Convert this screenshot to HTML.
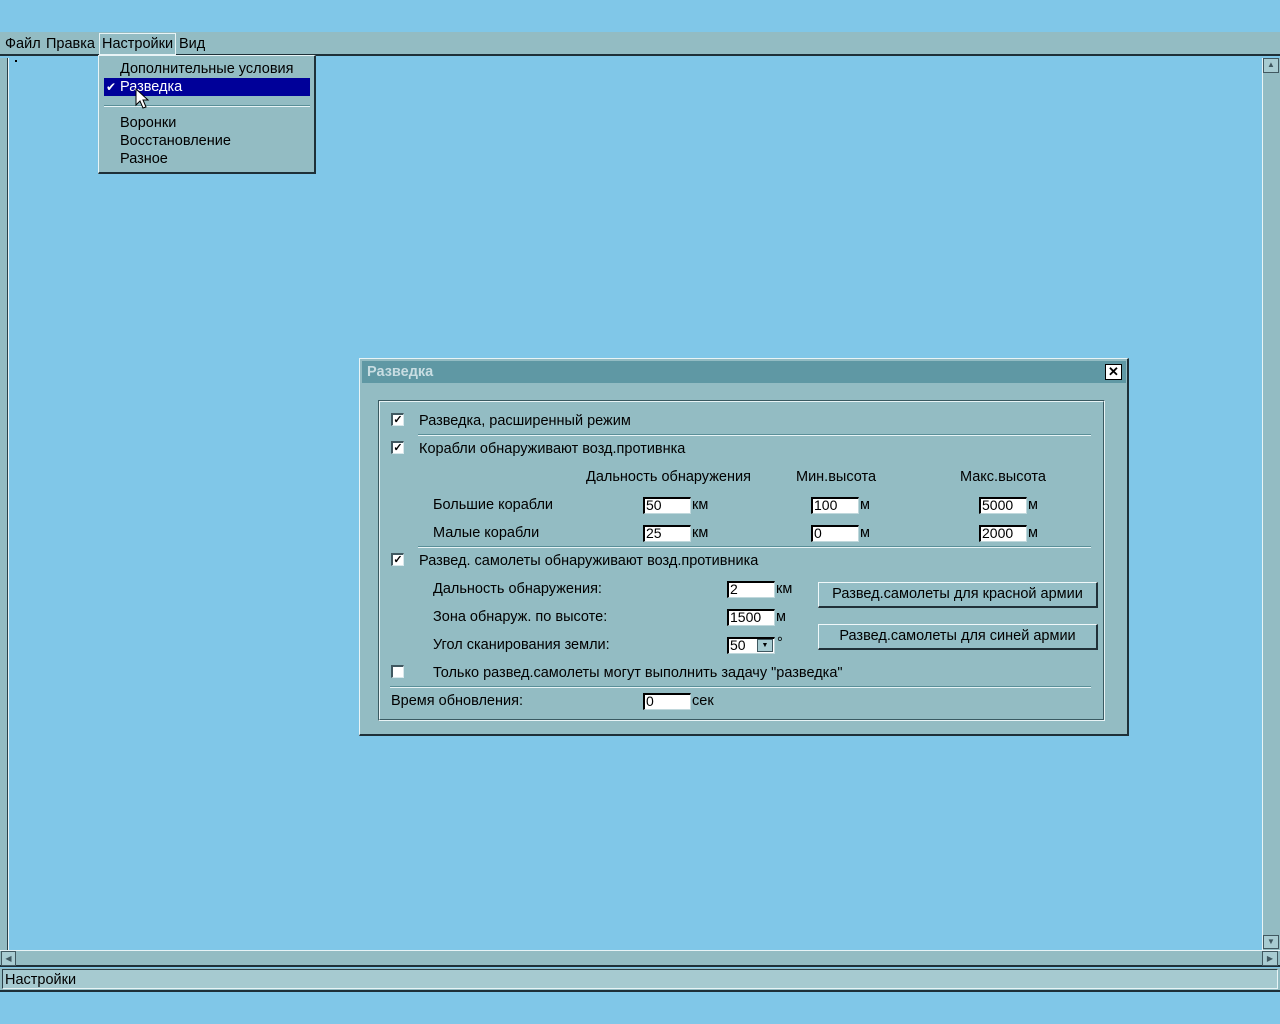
<!DOCTYPE html><html><head><meta charset="utf-8"><style>
body{margin:0;width:1280px;height:1024px;background:#80c7e8;position:relative;overflow:hidden;font-family:"Liberation Sans",Arial,sans-serif;font-size:14.5px;color:#000}
div,span{position:absolute;box-sizing:border-box}
.t{white-space:nowrap;line-height:16px;margin-top:1px}
.cb{width:13px;height:13px;background:#fff;border-top:2px solid #405860;border-left:2px solid #405860;border-right:1px solid #d8e8ec;border-bottom:1px solid #d8e8ec;font-size:11px;line-height:10px;text-align:center;font-weight:bold}
.in{height:17px;background:#fff;border-top:2px solid #000;border-left:2px solid #000;border-right:1px solid #c0d8dc;border-bottom:1px solid #c0d8dc;line-height:12px;padding-left:1px;font-size:14px}
.sep{height:2px;border-top:1px solid #5a8f98;border-bottom:1px solid #e8f4f6}
.btn{height:26px;background:#94bec6;border-top:1px solid #f0f8fa;border-left:1px solid #f0f8fa;border-right:2px solid #203038;border-bottom:2px solid #203038;text-align:center;line-height:22px}
</style></head><body>
<div style="left:0;top:32px;width:1280px;height:24px;background:#93bcc3;border-bottom:2px solid #1e3038"></div>
<div class="t" style="left:5px;top:35px">Файл</div>
<div class="t" style="left:46px;top:35px">Правка</div>
<div style="left:99px;top:33px;width:77px;height:22px;border:1px solid #e8f4f6"></div>
<div class="t" style="left:102px;top:35px">Настройки</div>
<div class="t" style="left:179px;top:35px">Вид</div>
<div style="left:0;top:58px;width:8px;height:892px;background:#93bcc3;border-right:1px solid #2a4048"></div>
<div style="left:8px;top:58px;width:10px;height:892px;border-left:1px solid #e8f4f6"></div>
<div style="left:15px;top:60px;width:2px;height:2px;background:#000"></div>
<div style="left:1262px;top:58px;width:18px;height:892px;background:#93bcc3;border-left:1px solid #e8f4f6"></div>
<div style="left:1263px;top:58px;width:16px;height:15px;background:#a8ccd2;border:1px solid #405860;font-size:8px;line-height:12px;text-align:center;color:#405860">▲</div>
<div style="left:1263px;top:935px;width:16px;height:14px;background:#a8ccd2;border:1px solid #405860;font-size:8px;line-height:12px;text-align:center;color:#405860">▼</div>
<div style="left:0;top:950px;width:1280px;height:17px;background:#93bcc3;border-top:1px solid #e8f4f6;border-bottom:2px solid #1e3038"></div>
<div style="left:1px;top:951px;width:15px;height:15px;background:#a8ccd2;border:1px solid #405860;font-size:8px;line-height:13px;text-align:center;color:#405860">◀</div>
<div style="left:1262px;top:951px;width:16px;height:15px;background:#a8ccd2;border:1px solid #405860;font-size:8px;line-height:13px;text-align:center;color:#405860">▶</div>
<div style="left:0;top:968px;width:1280px;height:24px;background:#93bcc3;border-bottom:2px solid #1e3038"></div>
<div style="left:2px;top:969px;width:1276px;height:20px;background:#a6cad0;border:1px solid #e8f4f6;border-top-color:#2a4048;border-left-color:#2a4048"></div>
<div class="t" style="left:5px;top:971px">Настройки</div>
<div style="left:98px;top:55px;width:218px;height:119px;background:#93bcc3;border:1px solid #e8f4f6;border-right:2px solid #1e3038;border-bottom:2px solid #1e3038"></div>
<div class="t" style="left:120px;top:60px">Дополнительные условия</div>
<div style="left:104px;top:78px;width:206px;height:18px;background:#000099"></div>
<div class="t" style="left:106px;top:78px;color:#fff;font-size:12px">✔</div>
<div class="t" style="left:120px;top:78px;color:#fff">Разведка</div>
<div style="left:104px;top:105px;width:206px;height:2px;border-top:1px solid #5a8f98;border-bottom:1px solid #e8f4f6"></div>
<div class="t" style="left:120px;top:114px">Воронки</div>
<div class="t" style="left:120px;top:132px">Восстановление</div>
<div class="t" style="left:120px;top:150px">Разное</div>
<svg style="position:absolute;left:135px;top:88px" width="16" height="24"><path d="M1 1 L1 17 L5 13 L8 20 L11 19 L8 12 L13 12 Z" fill="#fff" stroke="#000" stroke-width="1"/></svg>
<div style="left:359px;top:358px;width:770px;height:378px;background:#93bcc3;border:1px solid #e8f4f6;border-right:2px solid #1e3038;border-bottom:2px solid #1e3038"></div>
<div style="left:362px;top:361px;width:764px;height:22px;background:#5f98a4"></div>
<div class="t" style="left:367px;top:363px;color:#c8dde2;font-weight:bold">Разведка</div>
<div style="left:1105px;top:364px;width:17px;height:16px;background:#fff;border:1px solid #000;font-size:13px;line-height:13px;text-align:center;font-weight:bold">✕</div>
<div style="left:378px;top:400px;width:727px;height:321px;border:1px solid #e8f4f6;border-top-color:#3a5a62;border-left-color:#3a5a62"></div>
<div style="left:379px;top:401px;width:725px;height:319px;border:1px solid #3a5a62;border-top-color:#e8f4f6;border-left-color:#e8f4f6"></div>

<div class="cb" style="left:391px;top:413px">✓</div>
<div class="t" style="left:419px;top:412px">Разведка, расширенный режим</div>
<div class="sep" style="left:418px;top:434px;width:673px"></div>
<div class="cb" style="left:391px;top:441px">✓</div>
<div class="t" style="left:419px;top:440px">Корабли обнаруживают возд.противнка</div>
<div class="t" style="left:586px;top:468px">Дальность обнаружения</div>
<div class="t" style="left:796px;top:468px">Мин.высота</div>
<div class="t" style="left:960px;top:468px">Макс.высота</div>
<div class="t" style="left:433px;top:496px">Большие корабли</div>
<div class="in" style="left:643px;top:497px;width:48px">50</div><div class="t" style="left:692px;top:496px">км</div>
<div class="in" style="left:811px;top:497px;width:48px">100</div><div class="t" style="left:860px;top:496px">м</div>
<div class="in" style="left:979px;top:497px;width:48px">5000</div><div class="t" style="left:1028px;top:496px">м</div>
<div class="t" style="left:433px;top:524px">Малые корабли</div>
<div class="in" style="left:643px;top:525px;width:48px">25</div><div class="t" style="left:692px;top:524px">км</div>
<div class="in" style="left:811px;top:525px;width:48px">0</div><div class="t" style="left:860px;top:524px">м</div>
<div class="in" style="left:979px;top:525px;width:48px">2000</div><div class="t" style="left:1028px;top:524px">м</div>
<div class="sep" style="left:418px;top:546px;width:673px"></div>
<div class="cb" style="left:391px;top:553px">✓</div>
<div class="t" style="left:419px;top:552px">Развед. самолеты обнаруживают возд.противника</div>
<div class="t" style="left:433px;top:580px">Дальность обнаружения:</div>
<div class="in" style="left:727px;top:581px;width:48px">2</div><div class="t" style="left:776px;top:580px">км</div>
<div class="t" style="left:433px;top:608px">Зона обнаруж. по высоте:</div>
<div class="in" style="left:727px;top:609px;width:48px">1500</div><div class="t" style="left:776px;top:608px">м</div>
<div class="t" style="left:433px;top:636px">Угол сканирования земли:</div>
<div class="in" style="left:727px;top:637px;width:48px">50</div>
<div style="left:757px;top:639px;width:16px;height:13px;background:#a8ccd2;border:1px solid #405860;font-size:7px;line-height:11px;text-align:center">▼</div>
<div class="t" style="left:777px;top:634px">°</div>
<div class="btn" style="left:818px;top:582px;width:280px">Развед.самолеты для красной армии</div>
<div class="btn" style="left:818px;top:624px;width:280px">Развед.самолеты для синей армии</div>
<div class="cb" style="left:391px;top:665px"></div>
<div class="t" style="left:433px;top:664px">Только развед.самолеты могут выполнить задачу "разведка"</div>
<div class="sep" style="left:390px;top:686px;width:701px"></div>
<div class="t" style="left:391px;top:692px">Время обновления:</div>
<div class="in" style="left:643px;top:693px;width:48px">0</div><div class="t" style="left:692px;top:692px">сек</div>
</body></html>
